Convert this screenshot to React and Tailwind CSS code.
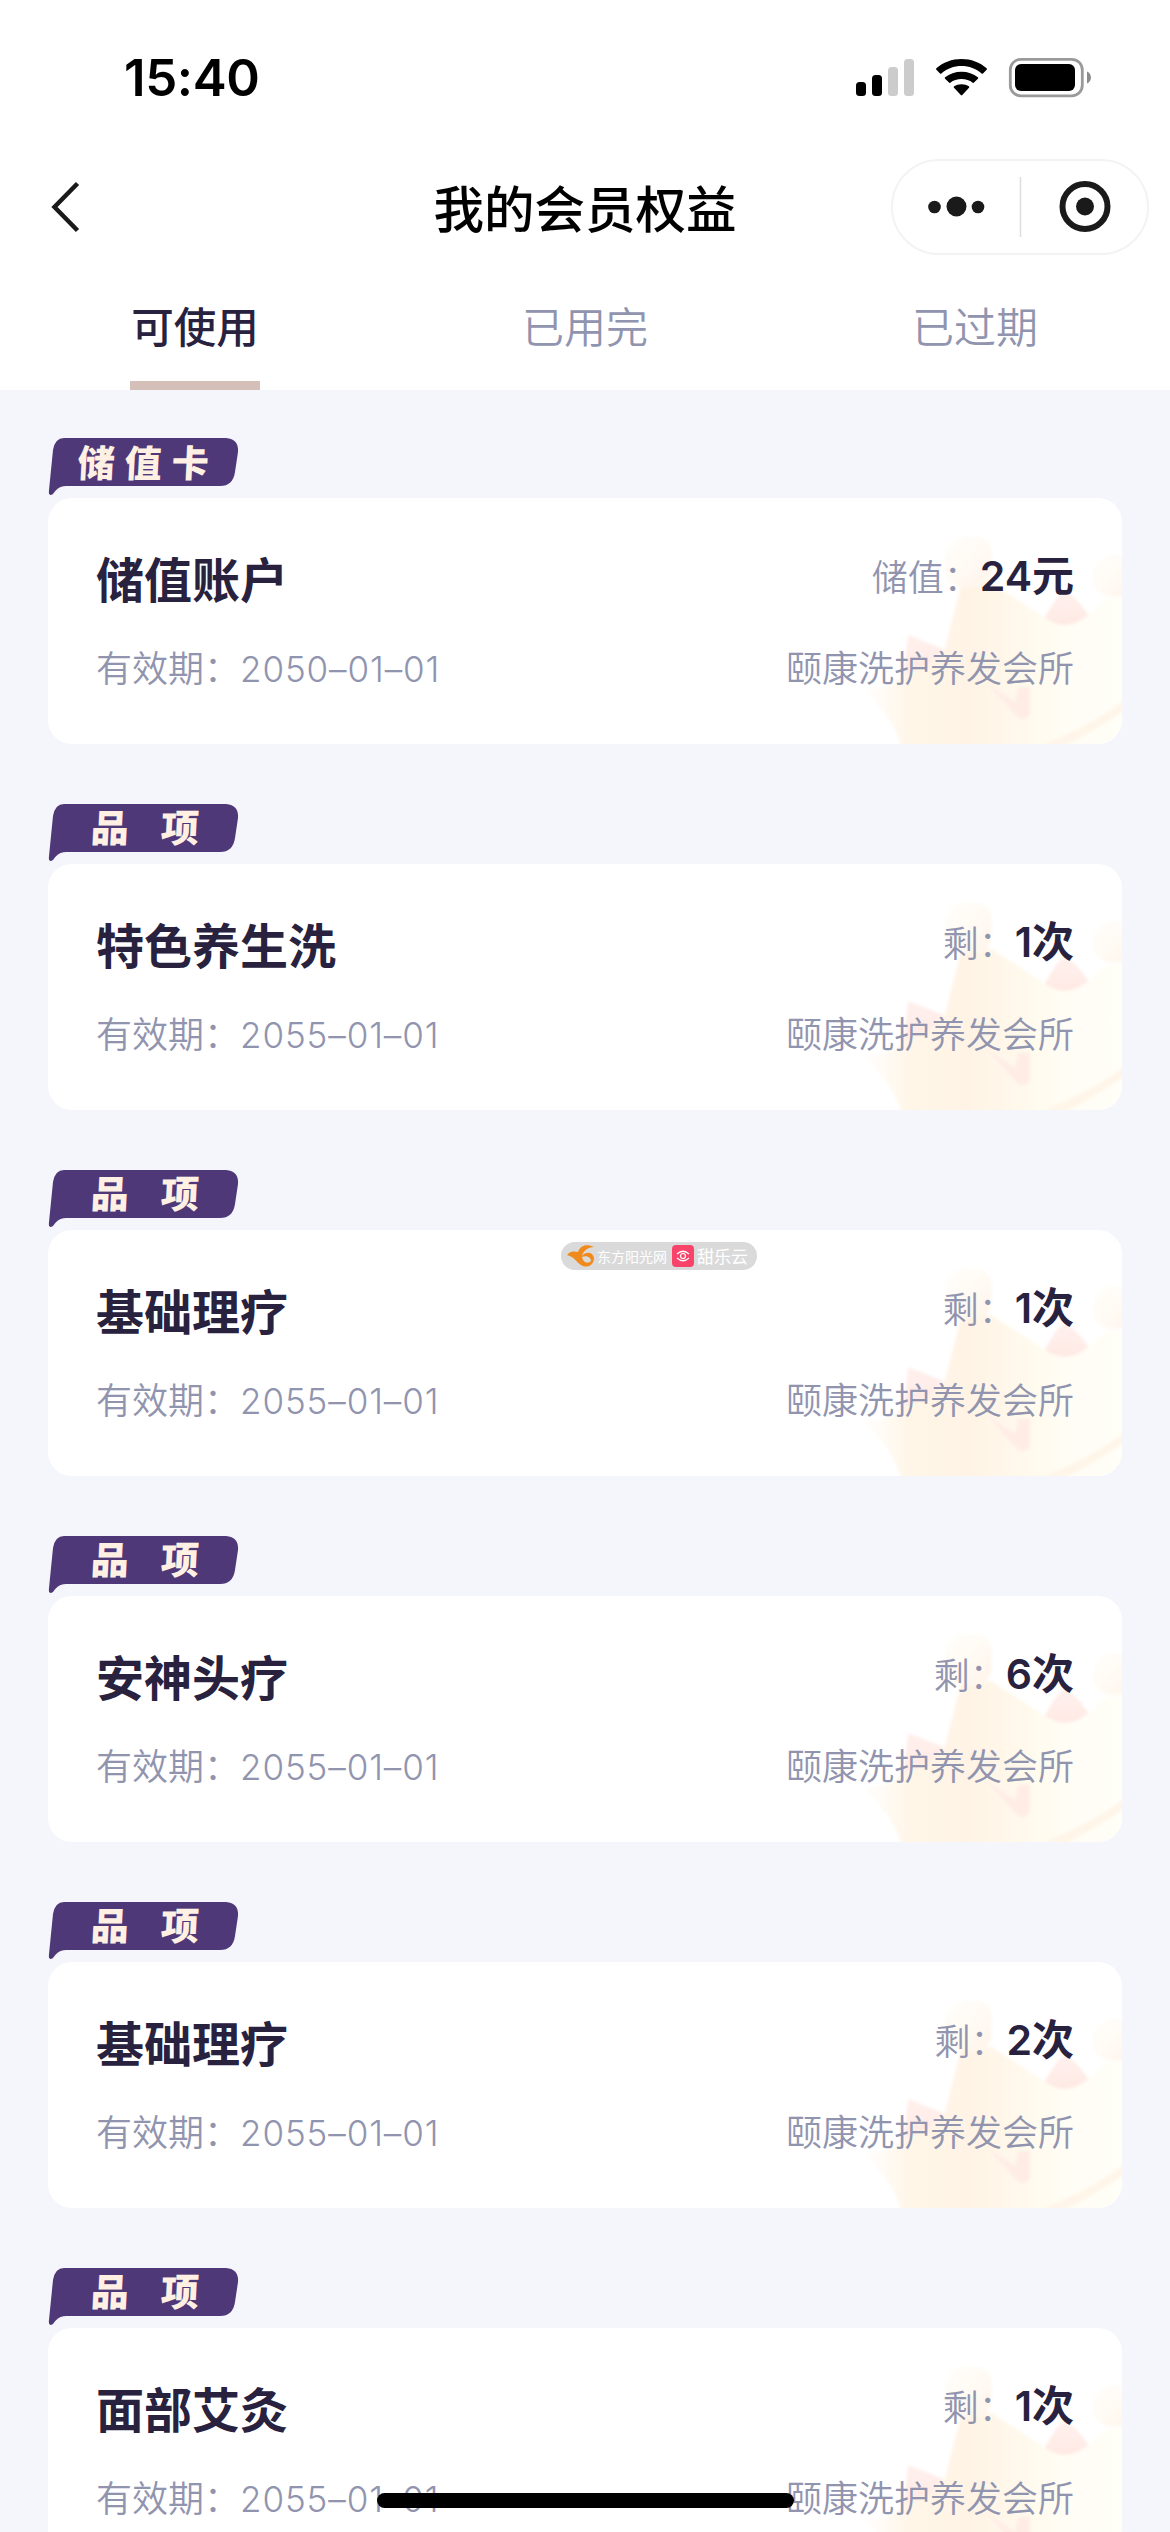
const tabs = ["可使用", "已用完", "已过期"];

const cards = [
  { badge: "储值卡", title: "储值账户", label: "储值：", value: "24", unit: "元", date: "2050–01–01" },
  { badge: "品项", title: "特色养生洗", label: "剩：", value: "1", unit: "次", date: "2055–01–01" },
  { badge: "品项", title: "基础理疗", label: "剩：", value: "1", unit: "次", date: "2055–01–01" },
  { badge: "品项", title: "安神头疗", label: "剩：", value: "6", unit: "次", date: "2055–01–01" },
  { badge: "品项", title: "基础理疗", label: "剩：", value: "2", unit: "次", date: "2055–01–01" },
  { badge: "品项", title: "面部艾灸", label: "剩：", value: "1", unit: "次", date: "2055–01–01" },
];

const shop = "颐康洗护养发会所";

function StatusBar() {
  return (
    <div className="flex h-[156px] shrink-0 items-start justify-between pl-[124px] pr-[78px] pt-[54px]">
      <span className="font-[Inter] text-[51px] font-semibold leading-[48px] tracking-[-0.4px] text-black">
        15:40
      </span>

      <svg className="mt-[3px]" width="237" height="42" viewBox="0 0 237 42">
        {/* signal */}
        <rect x="1" y="25" width="10" height="14" rx="3.5" />
        <rect x="17" y="18" width="10" height="21" rx="3.5" />
        <rect x="33" y="10" width="10" height="29" rx="3.5" fill="#cccccc" />
        <rect x="49" y="2" width="10" height="37" rx="3.5" fill="#cccccc" />

        {/* wifi */}
        <path d="M81.4 12.8a1 1 0 0 1 0-1.5C88 5.300 97 2 106.500 2s18.500 3.300 25.100 9.300a1 1 0 0 1 0 1.500l-3.600 3.700a1 1 0 0 1-1.400 0C121.200 11.700 114 9.100 106.500 9.100S91.800 11.700 86.400 16.500a1 1 0 0 1-1.400 0z" />
        <path d="M90.100 21.700a1 1 0 0 1 0-1.500C94.500 16.700 100.300 14.700 106.500 14.700s12 2 16.400 5.500a1 1 0 0 1 0 1.500l-3.900 3.900a1 1 0 0 1-1.300.1C114.700 23.400 110.700 22.100 106.500 22.100s-8.200 1.300-11.200 3.600a1 1 0 0 1-1.300-.1z" />
        <path d="M99 30.700a1 1 0 0 1 .1-1.500C101.100 28 103.700 27.200 106.500 27.200s5.400.8 7.400 2a1 1 0 0 1 .1 1.500l-6.700 7.400a1 1 0 0 1-1.500 0z" />

        {/* battery */}
        <rect x="155.300" y="2.300" width="72" height="36.500" rx="10.500" fill="none" stroke="#9a9a9a" strokeWidth="2.800" />
        <rect x="160" y="7" width="60" height="27" rx="6" />
        <path d="M232 14.500c5.300 2 5.300 10 0 12z" fill="#8c8c8c" />
      </svg>
    </div>
  );
}

function NavBar() {
  return (
    <div className="grid h-[102px] shrink-0 grid-cols-[279px_1fr_258px] items-center pr-[21px]">
      <svg className="ml-[50px]" width="32" height="54" viewBox="0 0 32 54">
        <path d="M27.500 3.500 4.500 27l23 23.500" fill="none" stroke="#1a1a1a" strokeWidth="4.500" />
      </svg>

      <h1 className="pb-[3px] text-center text-[50.5px] font-medium leading-[60px] text-black">
        我的会员权益
      </h1>

      <div className="flex h-24 w-[258px] items-center rounded-full border-2 border-[#f3f3f3]">
        <svg width="254" height="92" viewBox="0 0 254 92" fill="#1a1a1a">
          <circle cx="41.500" cy="46" r="6.300" />
          <circle cx="63.500" cy="45.500" r="10" />
          <circle cx="85" cy="46" r="6.300" />
          <path d="M127.500 16v60" stroke="#dedede" strokeWidth="1.500" />
          <circle cx="192" cy="45.500" r="22.500" fill="none" stroke="#1a1a1a" strokeWidth="6" />
          <circle cx="192" cy="45.500" r="9" />
        </svg>
      </div>
    </div>
  );
}

function Tabs() {
  return (
    <div className="grid h-[132px] shrink-0 grid-cols-3">
      {tabs.map((tab, i) => (
        <div key={tab} className="flex flex-col items-center justify-between pt-[39px]">
          <span
            className={
              i === 0
                ? "text-[42.5px] font-medium leading-[56px] text-[#28223f]"
                : "text-[42px] font-[350] leading-[56px] text-[#9194ae]"
            }
          >
            {tab}
          </span>
          {i === 0 && <div className="h-[9px] w-[130px] bg-[#d4c0b8]" />}
        </div>
      ))}
    </div>
  );
}

function Badge({ text }) {
  const wide = text.length === 3;
  return (
    <div className="relative h-[60px] w-[191px]">
      <svg className="absolute inset-0" width="191" height="60" viewBox="0 0 191 60">
        <path
          d="M16 0H178Q191 1 190 14L187 34Q185 48 172 48H18C11 48 8 52 5 56Q0 59 1 52L5 12Q7 0 16 0Z"
          fill="#4f3877"
        />
      </svg>
      <div
        className={
          wide
            ? "relative flex -skew-x-3 gap-[10px] pl-[30px] pt-[2px] text-[37px] font-black leading-[42px] text-[#fff0e4]"
            : "relative flex -skew-x-3 gap-[32px] pl-[43px] pt-px text-[38px] font-black leading-[42px] text-[#fff0e4]"
        }
      >
        {text.split("").map((ch) => (
          <span key={ch}>{ch}</span>
        ))}
      </div>
    </div>
  );
}

function Crown() {
  return (
    <svg className="absolute bottom-0 right-0" width="280" height="246" viewBox="246 54 840 738">
      <defs>
        <linearGradient id="crownBody" x1="0" y1="0" x2="1" y2="0">
          <stop offset="0" stopColor="#ffffff" />
          <stop offset="0.18" stopColor="#fff6e8" />
          <stop offset="0.4" stopColor="#fff3e5" />
          <stop offset="0.6" stopColor="#fff9ec" />
          <stop offset="0.75" stopColor="#fffdf4" />
          <stop offset="1" stopColor="#fffef8" />
        </linearGradient>
        <linearGradient id="crownBall" x1="0" y1="0" x2="1" y2="1">
          <stop offset="0" stopColor="#fffffc" />
          <stop offset="1" stopColor="#fff5eb" />
        </linearGradient>
        <linearGradient id="crownRed" x1="0" y1="0" x2="0" y2="1">
          <stop offset="0" stopColor="#fff0ec" />
          <stop offset="1" stopColor="#ffe9e4" />
        </linearGradient>
        <filter id="crownSoft" x="-10%" y="-10%" width="120%" height="120%">
          <feGaussianBlur stdDeviation="4" />
        </filter>
      </defs>
      <g filter="url(#crownSoft)">
        <path d="M445 465L570 515L490 610L430 590Z" fill="url(#crownRed)" />
        <path d="M855 420Q890 340 915 335Q945 345 985 405L960 445H870Z" fill="url(#crownRed)" />
        <path
          d="M605 310H695L850 410Q920 460 985 405L1040 355H1120V820H430Q400 700 300 625Q380 640 440 580L500 560L555 505Z"
          fill="url(#crownBody)"
        />
        <path d="M855 412Q885 355 915 345Q945 350 983 403Q920 460 855 412Z" fill="url(#crownRed)" />
        <rect x="555" y="170" width="140" height="150" rx="50" fill="url(#crownBall)" />
        <rect x="1000" y="225" width="130" height="125" rx="55" fill="url(#crownBall)" />
        <path d="M680 610L765 665L775 620H810V700Q795 730 770 710Z" fill="#ffede5" />
        <path d="M850 792Q990 740 1096 660V688Q1010 750 910 800Z" fill="#fff5e8" />
      </g>
    </svg>
  );
}

function Card({ item }) {
  return (
    <div className="h-[366px] shrink-0 px-[48px]">
      <Badge text={item.badge} />
      <div className="relative h-[246px] overflow-hidden rounded-[24px] bg-white">
        <Crown />
        <div className="relative flex h-full flex-col px-[48px] pt-[45px]">
          <div className="flex items-start justify-between">
            <h2 className="text-[48px] font-bold leading-[68px] text-[#28223f]">{item.title}</h2>
            <div className="flex items-baseline leading-[60px]">
              <span className="text-[36px] font-[350] text-[#9194ae]">{item.label}</span>
              <span className="text-[42px] font-bold text-[#28223f]">
                <span className="font-[Inter] text-[41px] font-semibold">{item.value}</span>
                {item.unit}
              </span>
            </div>
          </div>
          <div className="mt-[29px] flex items-baseline justify-between text-[36px] font-[350] leading-[52px] text-[#9194ae]">
            <div className="flex items-baseline">
              <span>有效期：</span>
              <span className="font-[Inter] text-[35px] tracking-[0.9px]">{item.date}</span>
            </div>
            <span>{shop}</span>
          </div>
        </div>
      </div>
    </div>
  );
}

function FloatingMark() {
  return (
    <div className="absolute left-[561px] top-[1242px] flex h-[28px] w-[196px] items-center rounded-full bg-[#dadada] pl-[5px] text-white">
      <svg width="30" height="26" viewBox="0 0 30 26">
        <path
          d="M1 12C5 7 9 9 12 9C14 3 20 0 28 4C22 4 17 8 16 13C20 8 27 9 28 15C28 22 21 26 15 22C10 19 9 14 1 12ZM16 14C17 20 22 21 25 18C25 14 20 12 16 14Z"
          fill="#f08a1c"
          fillRule="evenodd"
        />
      </svg>
      <span className="ml-[1px] w-[72px] whitespace-nowrap text-[14px] leading-[20px]">
        东方阳光网
      </span>
      <svg className="ml-[3px]" width="22" height="22" viewBox="0 0 22 22" fill="none" stroke="white">
        <rect width="22" height="22" rx="4" fill="#f9436b" stroke="none" />
        <path d="M5 9Q11 3.500 17 9M5 13Q11 18.500 17 13" strokeWidth="1.200" />
        <circle cx="11" cy="11" r="2.500" strokeWidth="1.200" />
      </svg>
      <span className="ml-[3px] text-[17px] leading-[20px]">甜乐云</span>
    </div>
  );
}

function App() {
  return (
    <div className="relative flex h-[2532px] w-[1170px] flex-col overflow-hidden bg-[#f4f6fc] font-['Noto_Sans_CJK_SC',sans-serif]">
      <div className="flex flex-col bg-white">
        <StatusBar />
        <NavBar />
        <Tabs />
      </div>

      <div className="flex flex-col pt-[48px]">
        {cards.map((item, i) => (
          <Card key={i} item={item} />
        ))}
      </div>

      <FloatingMark />

      {/* Home indicator */}
      <div className="absolute left-[377px] top-[2493px] h-[15px] w-[417px] rounded-full bg-black" />
    </div>
  );
}

export default App;
